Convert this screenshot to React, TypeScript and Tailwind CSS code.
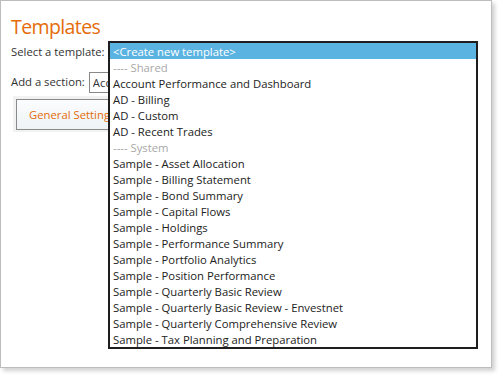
import React from 'react';

const options: { label: string; kind?: 'group' | 'selected' }[] = [
  { label: '<Create new template>', kind: 'selected' },
  { label: '---- Shared', kind: 'group' },
  { label: 'Account Performance and Dashboard' },
  { label: 'AD - Billing' },
  { label: 'AD - Custom' },
  { label: 'AD - Recent Trades' },
  { label: '---- System', kind: 'group' },
  { label: 'Sample - Asset Allocation' },
  { label: 'Sample - Billing Statement' },
  { label: 'Sample - Bond Summary' },
  { label: 'Sample - Capital Flows' },
  { label: 'Sample - Holdings' },
  { label: 'Sample - Performance Summary' },
  { label: 'Sample - Portfolio Analytics' },
  { label: 'Sample - Position Performance' },
  { label: 'Sample - Quarterly Basic Review' },
  { label: 'Sample - Quarterly Basic Review - Envestnet' },
  { label: 'Sample - Quarterly Comprehensive Review' },
  { label: 'Sample - Tax Planning and Preparation' },
];

const App: React.FC = () => {
  return (
    <div
      className="w-[501px] h-[377px] bg-white text-[11.3px] text-[#333]"
      style={{ fontFamily: '"Open Sans", "Noto Sans", sans-serif' }}
    >
      <div className="relative w-[492px] h-[368px] border border-[#bdbdbd] bg-white shadow-[3px_3px_4px_rgba(0,0,0,0.18)]">
        <h1 className="pl-[10px] pt-[13px] text-[19.5px] leading-[26px] tracking-[-0.6px] text-[#e46c0a]">Templates</h1>

        <div className="flex items-center pl-[10px] mt-[1px] h-[22px]">
          <span>Select a template:</span>
          <div className="ml-[5px] w-[350px] h-[20px] border border-[#888] bg-white" />
        </div>

        <div className="flex items-center pl-[10px] mt-[8px] h-[22px]">
          <span>Add a section:</span>
          <div className="ml-[4px] w-[120px] h-[21px] border border-[#888] bg-white pl-[3px] leading-[19px]">
            <div className="w-[15px] overflow-hidden whitespace-nowrap">Account</div>
          </div>
        </div>

        <div className="ml-[12px] mt-[3px] w-[140px] h-[36px] bg-[#f2f2f2] pl-[3px] pt-[3px]">
          <div className="w-[140px] h-[31px] border border-[#8a8a8a] bg-gradient-to-b from-[#fbfcfd] to-[#eef3f5] flex items-center pl-[12px] pt-[1px] text-[#e46c0a]">
            <div className="w-[79px] overflow-hidden whitespace-nowrap">General Settings</div>
          </div>
        </div>

        {/* open dropdown list */}
        <div className="absolute left-[107px] top-[40px] w-[370px] border-2 border-[#1e1e1e] bg-white">
          {options.map((o) => (
            <div
              key={o.label}
              className={
                'h-[16px] leading-[15px] pt-[1px] pl-[3px] whitespace-nowrap ' +
                (o.kind === 'selected'
                  ? 'bg-[#5bb3e1] text-white'
                  : o.kind === 'group'
                  ? 'text-[#a8a8a8]'
                  : 'text-[#222]')
              }
            >
              {o.label}
            </div>
          ))}
        </div>
      </div>
    </div>
  );
};

export default App;
